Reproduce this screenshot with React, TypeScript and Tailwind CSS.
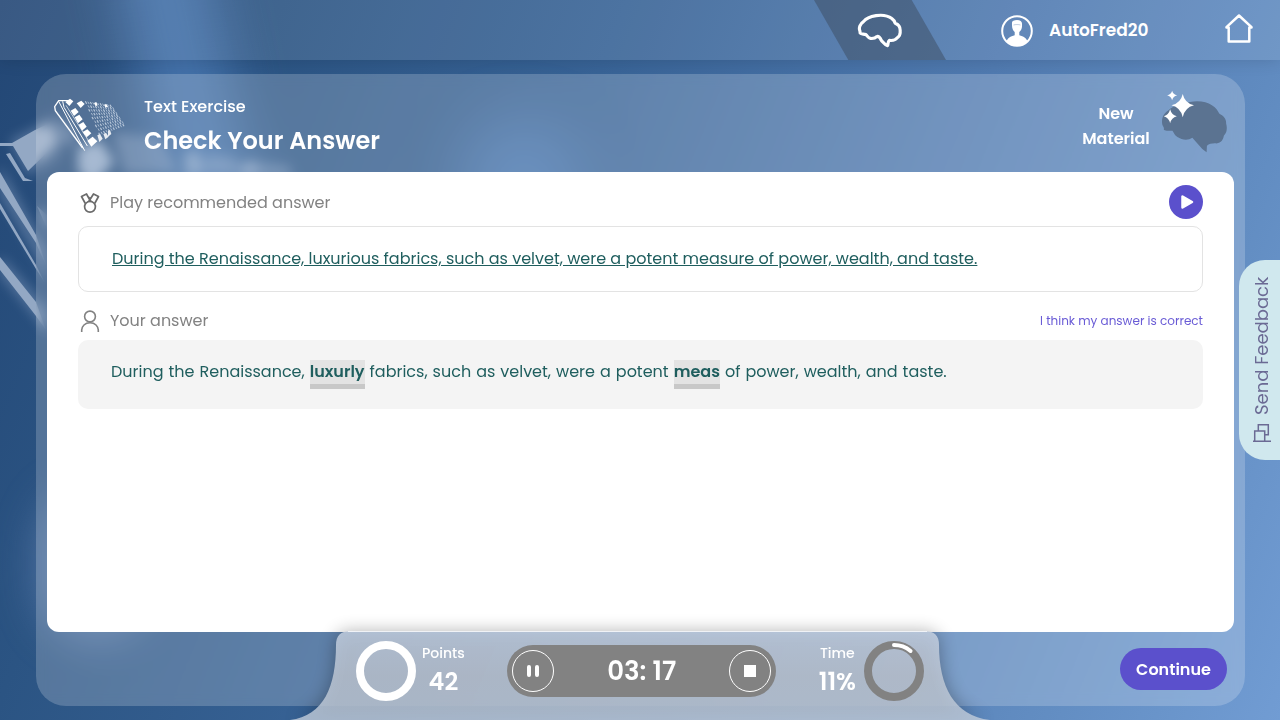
import type { ReactNode } from "react";

const SENTENCE =
  "During the Renaissance, luxurious fabrics, such as velvet, were a potent measure of power, wealth, and taste.";

const ANSWER =
  "During the Renaissance, luxurly fabrics, such as velvet, were a potent meas of power, wealth, and taste.".split(" ");

const WRONG_WORDS = new Set(["luxurly", "meas"]);

function Backdrop() {
  return (
    <div aria-hidden="true" className="absolute inset-0 -z-10 overflow-hidden bg-[linear-gradient(112deg,#234775_0%,#2b5483_18%,#386396_40%,#507ab0_65%,#628dc2_85%,#719cd3_100%)]">
      <div className="absolute -top-20 left-[145px] h-[370px] w-[90px] -rotate-12 rounded-full bg-[#5d92d4]/50 blur-[26px]" />
      <div className="absolute top-[120px] left-[460px] h-[120px] w-[120px] rounded-full bg-[#5d92d4]/40 blur-[28px]" />
      <div className="absolute top-[490px] left-[40px] h-[150px] w-[110px] rounded-full bg-[#8aa2d0]/45 blur-[22px]" />
      <svg viewBox="0 0 340 360" className="absolute top-0 left-0 h-[360px] w-[340px]">
        <g fill="#b9c9e4" opacity="0.3" className="blur-[6px]">
          <path d="M0 165 50 255 50 280 0 195ZM0 255 50 310 50 335 0 275ZM10 140 60 115 60 155 28 176Z" />
        </g>
        <g fill="#93a8c4">
          <path d="M0 143H12L35 130 50 123 58 142 28 171 13 146H0Z" />
          <path d="M6 154 10 153 25 178 33 181H23Z" />
          <path d="M0 172 36 235 48 270 36 243 0 188Z" />
          <path d="M0 203 36 265 45 283 36 269 0 209Z" />
          <path d="M0 257 36 302 46 330 36 316 0 270Z" />
          <path d="M37 206 48 216 50 235Z" />
        </g>
        <g fill="#a3b8d3">
          <path d="M78 148 100 140 114 162 94 184 78 172Z" opacity="0.85" />
          <path d="M184 154 198 150 206 172 186 178Z" opacity="0.55" />
          <path d="M240 164 256 160 260 176 242 178Z" opacity="0.6" />
          <path d="M58 120 74 128 76 146 60 142ZM112 132 160 138 178 172 124 174ZM206 154 236 158 240 176 206 174ZM258 162 290 166 292 178 260 178Z" opacity="0.35" />
        </g>
      </svg>
    </div>
  );
}

const KEY_ROWS = [0, 1, 2, 3, 4, 5, 6, 7, 8];
const KEY_COLS = [0, 1, 2, 3, 4, 5, 6, 7, 8, 9, 10];

function keyPoint(row: number, col: number) {
  const u = (col + (row % 2) * 0.4) / 10;
  const v = row / 8;
  const x = (1 - u) * (1 - v) * 94 + u * (1 - v) * 168 + u * v * 206 + (1 - u) * v * 134;
  const y = (1 - u) * (1 - v) * 10 + u * (1 - v) * 20 + u * v * 78 + (1 - u) * v * 104;
  return { x, y };
}

function KeyboardLogo() {
  return (
    <svg viewBox="0 0 216 165" className="h-[55px] w-[72px]" aria-hidden="true">
      <g fill="none" stroke="#fff" strokeWidth="4">
        <path d="M46 8 14 8 2 26 4 38 86 150" />
        <path d="M14 10 92 158" strokeWidth="3" />
        <path d="M26 10 30 28 100 144" strokeWidth="3" />
        <path d="M36 22 106 132" strokeWidth="2" />
      </g>
      <g fill="#fff">
        <path d="M34 12 48 2 58 10 46 24ZM68 16 82 8 92 18 80 30ZM50 38 64 30 74 42 60 54ZM62 58 76 50 86 64 72 76ZM74 80 88 72 98 86 84 98ZM86 102 100 94 112 106 98 118ZM100 128 116 116 130 130 112 146Z" />
        <path d="M130 112 138 108 146 122 136 132ZM148 108 156 104 164 116 154 124ZM162 98 168 96 172 108 162 116Z" opacity="0.85" />
      </g>
      <g stroke="#dbe5f1" fill="none" opacity="0.75">
        {KEY_ROWS.map((r) =>
          KEY_COLS.map((c) => {
            const { x, y } = keyPoint(r, c);
            return <path key={`${r}-${c}`} d={`M${x} ${y}l4 7`} strokeWidth={(r + c) % 2 ? 2.5 : 3.5} />;
          }),
        )}
      </g>
      <path d="M120 15 127 12 131 22 125 25ZM150 20 158 19 162 27 154 28Z" fill="#fff" />
    </svg>
  );
}

function BrainOutline() {
  return (
    <svg viewBox="51 39 138 106" className="h-[35px] w-[46px]" aria-hidden="true">
      <path
        d="M59 93C55 84 60 71 70 65 80 52 95 49 108 47 128 44 144 47 156 56 162 60 164 64 166 70 177 74 182 82 181 94 182 104 179 110 172 114 167 122 157 123 148 122 144 125 145 131 143 138 134 136 130 128 124 122 121 115 118 109 111 110 106 115 99 117 91 116 84 115 82 108 77 104 70 102 63 104 60 100Z"
        fill="none"
        stroke="#fff"
        strokeWidth="9.500"
        strokeLinejoin="round"
      />
    </svg>
  );
}

function NewMaterialIcon() {
  return (
    <svg viewBox="303 28 201 190" className="h-[63px] w-[67px]" aria-hidden="true">
      <path
        d="M306 130C304 112 309 101 324 90 340 74 364 67 390 64 416 59 440 63 456 74 469 82 475 92 478 99 490 106 500 114 499 130 503 144 501 158 492 166 490 178 484 188 470 189 459 188 448 190 441 196L440 216 427 206 397 172C384 181 366 179 352 170 344 166 342 158 337 151 327 150 318 153 311 148 313 140 307 138 306 130Z"
        fill="#5b7391"
      />
      <g fill="#fff">
        <path d="M368 40Q374 68 402 74 374 81 368 110 362 81 334 74 362 68 368 40Z" />
        <path d="M336 30Q339 41 351 44 339 47 336 59 333 47 321 44 333 41 336 30Z" />
        <path d="M330 86Q334 103 350 107 334 111 330 128 326 111 311 107 326 103 330 86Z" />
      </g>
    </svg>
  );
}

function Avatar() {
  return (
    <svg viewBox="0 0 32 32" className="size-8" aria-hidden="true">
      <circle cx="16" cy="16" r="14.800" fill="none" stroke="#fff" strokeWidth="2" />
      <path
        d="M11 8.500C10.500 6 13 5 16 5 19.500 5 21.500 6.500 21 10 21.300 13.500 19.800 15.500 18.300 17V20.300C22.500 21.500 25.500 23 26.500 26.500 21 32 11 32 5.500 26.500 6.500 23 9.500 21.500 13.700 20.300V17C12.200 15.500 10.700 13.500 11 8.500Z"
        fill="#fff"
      />
      <path d="M12.500 10C14.500 9.400 17.500 9.400 19.500 10" fill="none" stroke="#6386b5" strokeWidth="0.400" />
    </svg>
  );
}

function HomeIcon() {
  return (
    <svg viewBox="0 0 28 29" className="h-[29px] w-7" fill="none" stroke="#fff" strokeWidth="2.500" strokeLinecap="round" strokeLinejoin="round" aria-hidden="true">
      <path d="M1.500 13.200 14 1.500 26.500 13.200M3.700 13.500V27.500H24.300V13.500M1.500 13.500H3.700M24.300 13.500H26.500" />
    </svg>
  );
}

function MedalIcon() {
  return (
    <svg viewBox="0 0 20 22" className="h-[22px] w-5" fill="none" stroke="#6b6b6b" strokeWidth="1.700" strokeLinejoin="round" aria-hidden="true">
      <circle cx="10" cy="14.800" r="5.400" />
      <path d="M5.300 11.500 1.500 4.500 6.500 2 10 8.400M14.700 11.500 18.500 4.500 13.500 2 8.600 9.800M10 8.400 11.600 9.800M8 4.600 10 6.500" />
    </svg>
  );
}

function PersonIcon() {
  return (
    <svg viewBox="0 0 20 22" className="h-[22px] w-5" fill="none" stroke="#828282" strokeWidth="1.600" aria-hidden="true">
      <circle cx="10" cy="6.500" r="5.400" />
      <path d="M1.700 22V20.500C1.700 16 5 12.800 10 12.800S18.300 16 18.300 20.500V22" />
    </svg>
  );
}

function FeedbackIcon() {
  return (
    <svg viewBox="0 0 18 20" className="h-5 w-[18px] rotate-180" fill="none" stroke="#6b6a94" strokeWidth="1.500" aria-hidden="true">
      <path d="M0 18.300H18M1.700 18.300V8H11.700V18.300M5.300 8V1.700H15.300V11.700H11.700" />
    </svg>
  );
}

function Ring({ percent }: { percent?: number }) {
  const timed = percent !== undefined;
  return (
    <svg viewBox="0 0 60 60" className="size-[60px]" fill="none" aria-hidden="true">
      <circle cx="30" cy="30" r="26" stroke={timed ? "#828282" : "#fff"} strokeWidth="8" />
      {timed && (
        <circle cx="30" cy="30" r="26" stroke="#fff" strokeWidth="4" strokeLinecap="round" pathLength="100" strokeDasharray={`${percent} 100`} transform="rotate(-90 30 30)" />
      )}
    </svg>
  );
}

function Stat({ label, value }: { label: string; value: string }) {
  return (
    <div className="flex flex-col items-center text-white">
      <span className="text-sm leading-6 font-medium">{label}</span>
      <span className="text-2xl leading-[34px] font-semibold">{value}</span>
    </div>
  );
}

function RoundControl({ label, children }: { label: string; children: ReactNode }) {
  return (
    <button type="button" aria-label={label} className="flex size-[42px] items-center justify-center rounded-full border border-white">
      {children}
    </button>
  );
}

function StatusBar() {
  return (
    <div className="absolute bottom-0 left-1/2 h-[89px] w-[700px] -translate-x-1/2">
      <svg viewBox="0 0 700 89" className="absolute inset-0 size-full overflow-visible" aria-hidden="true">
        <defs>
          <linearGradient id="bar" x1="0" y1="0" x2="0" y2="1">
            <stop offset="0" stopColor="#c9d4e4" />
            <stop offset="0.5" stopColor="#c4ccd8" />
            <stop offset="1" stopColor="#c2cddb" />
          </linearGradient>
          <filter id="soft" x="-10%" y="-60%" width="120%" height="220%">
            <feGaussianBlur stdDeviation="9" />
          </filter>
        </defs>
        <path d="M0 89C34 85 46 55 46 14Q46 1 60 1H635Q649 1 649 14C649 55 664 85 700 89Z" fill="#000" opacity="0.32" filter="url(#soft)" />
        <path d="M0 89C34 85 46 55 46 14Q46 0 60 0H635Q649 0 649 14C649 55 664 85 700 89Z" fill="url(#bar)" opacity="0.8" />
        <path d="M58 0.500H637" stroke="#fff" opacity="0.700" />
      </svg>
      <div className="relative flex justify-between px-[66px] pt-2.5">
        <div className="flex gap-1.5">
          <Ring />
          <Stat label="Points" value="42" />
        </div>
        <div className="mt-1 flex h-[52px] w-[269px] items-center justify-between rounded-full bg-[#828282] px-[5px]">
          <RoundControl label="Pause">
            <span className="flex gap-1">
              <span className="h-3 w-1 rounded-full bg-white" />
              <span className="h-3 w-1 rounded-full bg-white" />
            </span>
          </RoundControl>
          <span className="pt-px text-[26px] font-semibold text-white">03: 17</span>
          <RoundControl label="Stop">
            <span className="size-3 bg-white" />
          </RoundControl>
        </div>
        <div className="flex gap-2">
          <Stat label="Time" value="11%" />
          <Ring percent={11} />
        </div>
      </div>
    </div>
  );
}

export default function App() {
  return (
    <div className="relative isolate flex min-h-screen flex-col overflow-hidden font-['Poppins','Inter',sans-serif]">
      <Backdrop />
      <header className="flex h-[60px] items-center justify-end bg-white/10 pr-[27px] shadow-[0_0_16px_rgba(0,0,0,0.14)]">
        <button type="button" aria-label="Brain overview" className="flex h-full w-[132px] items-center justify-center bg-[#3b4c60]/50 [clip-path:polygon(0_0,74%_0,100%_100%,26%_100%)]">
          <BrainOutline />
        </button>
        <a href="#profile" className="ml-[55px] flex w-[224px] items-center gap-4 pt-0.5 text-[17px] font-semibold text-white">
          <Avatar />
          AutoFred20
        </a>
        <a href="#home" aria-label="Home" className="-mt-1">
          <HomeIcon />
        </a>
      </header>

      <main className="mt-3.5 mr-[35px] mb-3.5 ml-9 flex flex-1 flex-col rounded-[30px] bg-white/20 px-[11px] backdrop-blur-[6px]">
        <div className="flex h-[98px] items-center justify-between pr-1.5 pl-[7px] text-white">
          <div className="flex items-center gap-[18px] pt-1">
            <KeyboardLogo />
            <div className="pt-1">
              <p className="leading-6 font-medium">Text Exercise</p>
              <h1 className="mt-1 text-2xl leading-9 font-semibold">Check Your Answer</h1>
            </div>
          </div>
          <div className="flex items-center gap-[11px] pb-1">
            <p className="w-[68px] pt-2.5 text-center leading-[25px] font-semibold">New Material</p>
            <NewMaterialIcon />
          </div>
        </div>

        <section className="flex-1 rounded-xl bg-white px-[31px] pt-[13px]">
          <div className="flex h-[34px] items-center justify-between">
            <h2 className="flex items-center gap-2.5 pt-px pl-0.5 text-[#828282]">
              <MedalIcon />
              Play recommended answer
            </h2>
            <button type="button" aria-label="Play recommended answer" className="flex size-[34px] items-center justify-center rounded-full bg-[#5b50cc]">
              <svg viewBox="0 0 14 16" className="ml-0.5 h-4 w-3.5" aria-hidden="true">
                <path d="M2.500 2.500V13.500L12 8Z" fill="#fff" stroke="#fff" strokeWidth="2.500" strokeLinejoin="round" />
              </svg>
            </button>
          </div>
          <p className="mt-[7px] flex min-h-[66px] items-center rounded-[10px] border border-[#e3e3e3] px-[33px] text-[#1f5e5e] underline">
            {SENTENCE}
          </p>
          <div className="mt-3 flex h-[34px] items-center justify-between">
            <h2 className="flex items-center gap-2.5 pl-0.5 text-[#828282]">
              <PersonIcon />
              Your answer
            </h2>
            <button type="button" className="text-xs text-[#6a5cd6]">
              I think my answer is correct
            </button>
          </div>
          <p className="mt-0.5 flex min-h-[69px] flex-wrap items-start gap-x-[5px] rounded-[10px] bg-[#f4f4f4] px-[33px] pt-5 leading-6 text-[#1f5e5e]">
            {ANSWER.map((word, i) =>
              WRONG_WORDS.has(word) ? (
                <strong key={i} className="border-b-[5px] border-[#c8c8c8] bg-[#e3e3e3] font-semibold">
                  {word}
                </strong>
              ) : (
                <span key={i}>{word}</span>
              ),
            )}
          </p>
        </section>

        <footer className="flex h-[74px] items-center justify-end pr-[7px]">
          <button type="button" className="h-[42px] w-[107px] rounded-full bg-[#5b50cc] pt-px font-semibold text-white">
            Continue
          </button>
        </footer>
      </main>

      <StatusBar />

      <button type="button" className="absolute top-1/2 right-0 flex h-[200px] w-[41px] -translate-y-1/2 rotate-180 items-center justify-center gap-2 rounded-r-[26px] bg-[#d0e8ee] pr-1.5 text-lg text-[#6b6a94] [writing-mode:vertical-rl]">
        <FeedbackIcon />
        Send Feedback
      </button>
    </div>
  );
}
